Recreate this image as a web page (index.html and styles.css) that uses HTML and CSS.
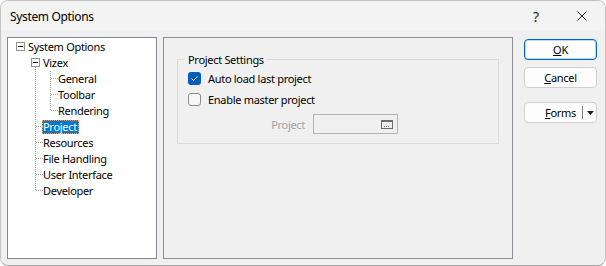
FILE: index.html
```html
<!DOCTYPE html>
<html lang="en">
<head>
    <meta charset="UTF-8">
    <title>System Options</title>
    <link rel="stylesheet" href="styles.css">
</head>
<body>
    <div class="window">
        <div class="titlebar">
            <span class="title">System Options</span>
            <span class="tb-btn help">?</span>
            <span class="tb-btn close">
                <svg width="10" height="10" viewBox="0 0 10 10"><path d="M0.5 0.5 L9.5 9.5 M9.5 0.5 L0.5 9.5" stroke="#1b1b1b" stroke-width="1" fill="none"/></svg>
            </span>
        </div>

        <div class="main">
            <!-- tree of option pages -->
            <div class="tree">
                <svg class="tree-lines" width="148" height="220" viewBox="0 0 148 220" shape-rendering="crispEdges">
                    <g stroke="#a0a0a0" stroke-dasharray="1 1" fill="none">
                        <path d="M27.5 29 V153"/>
                        <path d="M28 88.5 H35 M28 104.5 H35 M28 120.5 H35 M28 136.5 H35 M28 152.5 H35"/>
                        <path d="M42.5 33 V73"/>
                        <path d="M43 40.5 H50 M43 56.5 H50 M43 72.5 H50"/>
                    </g>
                    <rect x="8.5" y="4.5" width="8" height="8" fill="#fff" stroke="#919191"/>
                    <path d="M10 8.5 H15" stroke="#1e1e1e"/>
                    <rect x="23.5" y="20.5" width="8" height="8" fill="#fff" stroke="#919191"/>
                    <path d="M25 24.5 H30" stroke="#1e1e1e"/>
                </svg>
                <div class="node lv0"><span class="label">System Options</span></div>
                <div class="node lv1"><span class="label">Vizex</span></div>
                <div class="node lv2"><span class="label">General</span></div>
                <div class="node lv2"><span class="label">Toolbar</span></div>
                <div class="node lv2"><span class="label">Rendering</span></div>
                <div class="node lv1"><span class="label selected">Project</span></div>
                <div class="node lv1"><span class="label">Resources</span></div>
                <div class="node lv1"><span class="label">File Handling</span></div>
                <div class="node lv1"><span class="label">User Interface</span></div>
                <div class="node lv1"><span class="label">Developer</span></div>
            </div>

            <!-- selected page -->
            <div class="page">
                <fieldset class="group">
                    <legend>Project Settings</legend>
                    <label class="check">
                        <span class="box checked">
                            <svg width="13" height="13" viewBox="0 0 13 13"><path d="M3.5 6.5 L5.5 8.5 L9.5 4.5" stroke="#fff" stroke-width="1" fill="none"/></svg>
                        </span>
                        Auto load last project
                    </label>
                    <label class="check">
                        <span class="box"></span>
                        Enable master project
                    </label>
                    <div class="field">
                        <span class="field-label">Project</span>
                        <span class="picker">
                            <svg width="12" height="9" viewBox="0 0 12 9" shape-rendering="crispEdges">
                                <rect x="0.5" y="0.5" width="11" height="8" fill="none" stroke="#6d6d6d"/>
                                <rect x="1" y="1" width="10" height="1" fill="#6d6d6d"/>
                                <rect x="3" y="6" width="1" height="1" fill="#6d6d6d"/>
                                <rect x="5" y="6" width="1" height="1" fill="#6d6d6d"/>
                                <rect x="7" y="6" width="1" height="1" fill="#6d6d6d"/>
                            </svg>
                        </span>
                    </div>
                </fieldset>
            </div>

            <!-- dialog buttons -->
            <div class="buttons">
                <button class="btn default"><u>O</u>K</button>
                <button class="btn"><u>C</u>ancel</button>
                <button class="btn split">
                    <span class="split-text"><u>F</u>orms</span>
                    <span class="sep"></span>
                    <svg class="arrow" width="7" height="4" viewBox="0 0 7 4"><path d="M0 0 H7 L3.5 4 Z" fill="#1e1e1e"/></svg>
                </button>
            </div>
        </div>
    </div>
</body>
</html>
```

FILE: styles.css
```css
* {
    box-sizing: border-box;
}

body {
    margin: 0;
    background-color: #fff;
    font-family: "Noto Sans", "Open Sans", sans-serif;
    font-size: 11px;
    letter-spacing: -0.3px;
    color: #000;
}

.window {
    width: 606px;
    height: 266px;
    border: 1px solid #c4c4c4;
    border-bottom-color: #a8a8a8;
    border-radius: 8px;
    background-color: #f0f0f0;
    overflow: hidden;
}

.titlebar {
    display: flex;
    align-items: center;
    height: 30px;
    background-color: #f3f3f3;
}

.title {
    flex: 1;
    padding-left: 9px;
    font-size: 12px;
    letter-spacing: -0.35px;
}

.tb-btn {
    display: flex;
    align-items: center;
    justify-content: center;
    width: 46px;
    height: 30px;
}

.help {
    font-size: 14px;
    color: #1b1b1b;
}

.main {
    display: flex;
    padding: 6px 0 0 6px;
}

/* tree */
.tree {
    position: relative;
    width: 150px;
    height: 222px;
    padding-top: 1px;
    border: 1px solid #828790;
    background-color: #fff;
}

.tree-lines {
    position: absolute;
    top: 0;
    left: 0;
    pointer-events: none;
}

.node {
    display: flex;
    align-items: center;
    height: 16px;
    white-space: nowrap;
}

.lv0 { padding-left: 19px; }
.lv1 { padding-left: 34px; }
.lv2 { padding-left: 49px; }

.label {
    display: inline-block;
    line-height: 12px;
    padding: 0 1px 0 0;
    border: 1px dotted transparent;
}

.label.selected {
    background-color: #0078d7;
    color: #fff;
    border-color: #f5a34a;
}

/* page */
.page {
    width: 350px;
    height: 222px;
    margin-left: 6px;
    padding: 14px 13px 0;
    border: 1px solid #8e9096;
}

.group {
    margin: 0;
    padding: 1px 0 9px 7px;
    min-width: 0;
    border: 1px solid #dcdcdc;
}

.group legend {
    padding: 0 3px;
    line-height: 15px;
}

.check {
    display: flex;
    align-items: center;
    height: 21px;
    padding-left: 3px;
}

.box {
    display: inline-block;
    width: 13px;
    height: 13px;
    margin-right: 7px;
    border: 1px solid #8b8b8b;
    border-radius: 3px;
    background-color: #f7f7f7;
}

.box.checked {
    border: none;
    background-color: #005fb8;
}

.box svg {
    display: block;
}

.field {
    display: flex;
    align-items: center;
    margin-top: 4px;
    padding-left: 3px;
}

.field-label {
    width: 117px;
    margin-right: 8px;
    text-align: right;
    color: #a0a0a0;
}

.picker {
    display: flex;
    align-items: center;
    justify-content: flex-end;
    width: 85px;
    height: 20px;
    padding-right: 4px;
    border: 1px solid #b4b4b4;
}

/* buttons */
.buttons {
    display: flex;
    flex-direction: column;
    margin: 2px 0 0 11px;
}

.btn {
    width: 73px;
    height: 21px;
    margin: 0 0 7px;
    padding: 0;
    border: 1px solid #d0d0d0;
    border-radius: 4px;
    background-color: #fdfdfd;
    font: inherit;
    letter-spacing: inherit;
    color: #000;
}

.btn.default {
    border-color: #0067c0;
    box-shadow: inset 0 0 0 1px rgba(0, 103, 192, 0.25);
}

.btn.split {
    display: flex;
    align-items: center;
    margin-top: 7px;
    padding-left: 20px;
}

.sep {
    width: 1px;
    height: 13px;
    margin: 0 4px 0 6px;
    background-color: #7a7a7a;
}
```
